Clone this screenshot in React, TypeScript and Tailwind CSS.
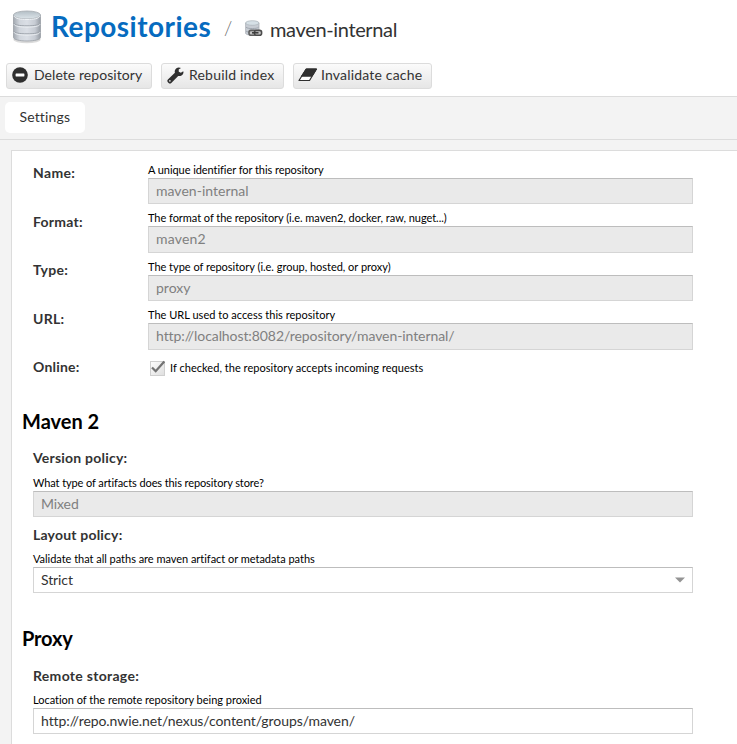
import React from "react";

const SANS = "font-['Lato','Open_Sans',sans-serif]";

function DatabaseIcon() {
  return (
    <svg width="30" height="34" viewBox="0 0 30 34" className="shrink-0">
      <defs>
        <linearGradient id="dbBody" x1="0" x2="1">
          <stop offset="0" stopColor="#a3a9b1" />
          <stop offset="0.22" stopColor="#d0d5dc" />
          <stop offset="0.5" stopColor="#dadee5" />
          <stop offset="0.8" stopColor="#c6cbd3" />
          <stop offset="1" stopColor="#969ca4" />
        </linearGradient>
        <linearGradient id="dbTop" x1="0" x2="0" y1="0" y2="1">
          <stop offset="0" stopColor="#b3bec5" />
          <stop offset="1" stopColor="#dde5ea" />
        </linearGradient>
      </defs>
      <ellipse cx="15" cy="29.6" rx="13.6" ry="3.6" fill="#000" opacity="0.14" />
      <path d="M1.5 5v22.500c0 2 6 3.500 13.500 3.500s13.500-1.500 13.500-3.500V5z" fill="url(#dbBody)" stroke="#9a9fa6" strokeWidth="0.8" />
      <path d="M1.500 13c1 2 6 2.800 13.500 2.800S27.500 15 28.500 13M1.500 21c1 2 6 2.800 13.500 2.800S27.500 23 28.500 21" fill="none" stroke="#a0a6ae" strokeWidth="1" />
      <path d="M2 14.300c1 2 6 2.800 13 2.800s12-.8 13-2.800M2 22.300c1 2 6 2.800 13 2.800s12-.8 13-2.800" fill="none" stroke="#eceff3" strokeWidth="0.900" />
      <ellipse cx="15" cy="5" rx="13.500" ry="4" fill="url(#dbTop)" stroke="#aab0b6" strokeWidth="0.900" />
      <path d="M2 6.200c1.500 2.300 6 3.300 13 3.300s11.500-1 13-3.300" fill="none" stroke="#eef2f5" strokeWidth="1" />
    </svg>
  );
}

function ProxyIcon() {
  return (
    <svg width="18" height="17" viewBox="0 0 18 17" className="shrink-0">
      <path d="M.6 3v10.200c0 1.200 3 2 6.700 2s6.700-.8 6.700-2V3z" fill="#c8cdd4" stroke="#a3a9b0" strokeWidth="0.700" />
      <path d="M1 7.200c1 1 3 1.300 6.300 1.300S12.500 8.200 13.600 7.200M1 11c1 1 3 1.300 6.300 1.300" fill="none" stroke="#9ba2aa" strokeWidth="0.900" />
      <ellipse cx="7.300" cy="3" rx="6.700" ry="2.300" fill="#d6e0e6" stroke="#a9b1b8" strokeWidth="0.700" />
      <rect x="4" y="10.400" width="7.200" height="4.800" rx="2" fill="#c4c4c4" stroke="#5e5e5e" strokeWidth="1.600" />
      <rect x="9.400" y="10.400" width="7.200" height="4.800" rx="2" fill="#c4c4c4" stroke="#4c4c4c" strokeWidth="1.600" />
      <path d="M7 12.800h6.500" stroke="#3a3a3a" strokeWidth="1.500" />
    </svg>
  );
}

function MinusIcon() {
  return (
    <svg width="16" height="16" viewBox="0 0 16 16" className="-mt-[2px] shrink-0">
      <circle cx="8" cy="8" r="7.800" fill="#2f2f2f" />
      <rect x="3.600" y="6.500" width="8.800" height="3" rx="0.400" fill="#fff" />
    </svg>
  );
}

function WrenchIcon() {
  return (
    <svg width="17" height="17" viewBox="0 0 17 17" className="-mt-[2px] shrink-0">
      <path
        fillRule="evenodd"
        d="M16.200 4.300 13.900 5.800 11.800 4.700 11.700 2.400 14 1C12.600.2 10.600.2 9.100 1.500 7.900 2.600 7.400 4.200 7.900 5.800L.9 12.500c-.8.800-.8 1.900 0 2.700l.7.700c.8.800 1.900.8 2.700 0l6.900-7c1.600.4 3.200 0 4.300-1.200 1-1 1.200-2.300.7-3.400zM2.900 14.700a.8.8 0 1 1 0-1.600.8.8 0 0 1 0 1.600z"
        fill="#2f2f2f"
      />
    </svg>
  );
}

function EraserIcon() {
  return (
    <svg width="20" height="14" viewBox="0 0 20 14" className="-mt-[2px] shrink-0">
      <path d="M8.200 1h10.300L11.500 12.500H1z" fill="#fff" stroke="#2f2f2f" strokeWidth="1.200" strokeLinejoin="round" />
      <path d="M8.200 1h10.300l-4.400 7.200H3.500z" fill="#2f2f2f" stroke="#2f2f2f" strokeWidth="1" strokeLinejoin="round" />
    </svg>
  );
}

function CheckedBox() {
  return (
    <svg width="16" height="16" viewBox="0 0 16 16" className="shrink-0">
      <defs>
        <linearGradient id="boxFill" x1="0" x2="1" y1="0" y2="1">
          <stop offset="0" stopColor="#fdfdfd" />
          <stop offset="1" stopColor="#dedede" />
        </linearGradient>
      </defs>
      <rect x="0.500" y="1.500" width="14" height="14" fill="url(#boxFill)" stroke="#cfcfcf" />
      <path d="M2 7.500 5.700 11.200 14.300 1.600" fill="none" stroke="#737373" strokeWidth="2.300" />
    </svg>
  );
}

function ToolButton({ icon, label, className }: { icon: React.ReactNode; label: string; className: string }) {
  return (
    <button
      className={`flex h-[26px] items-center rounded-[3px] border border-[#dcdcdc] bg-linear-to-b from-[#fbfbfb] to-[#e6e6e6] text-[14px] leading-[22px] whitespace-nowrap text-[#333] ${className}`}
    >
      {icon}
      <span className="-mt-0.5">{label}</span>
    </button>
  );
}

function Help({ children, className }: { children: string; className: string }) {
  return <div className={`h-4 text-[11px] leading-[15px] whitespace-nowrap text-black ${className}`}>{children}</div>;
}

function Box({ children, className }: { children: React.ReactNode; className: string }) {
  return (
    <div
      className={`flex items-center border border-[#d5d5d5] border-t-[#bdbdbd] px-[7px] text-[14px] leading-[20px] whitespace-nowrap ${className}`}
    >
      {children}
    </div>
  );
}

const rows = [
  { label: "Name:", labelCls: "pt-px tracking-[0.35px]", help: "A unique identifier for this repository", helpCls: "tracking-[-0.06px]", value: "maven-internal", valueCls: "h-[26px] tracking-[0.02px]" },
  { label: "Format:", labelCls: "pt-[2px] tracking-[0.25px]", help: "The format of the repository (i.e. maven2, docker, raw, nuget...)", helpCls: "tracking-[-0.04px]", value: "maven2", valueCls: "h-[27px] pb-[2px] tracking-[0.2px]" },
  { label: "Type:", labelCls: "pt-px tracking-[0.3px]", help: "The type of repository (i.e. group, hosted, or proxy)", helpCls: "tracking-[-0.02px]", value: "proxy", valueCls: "h-[26px] tracking-[0.02px]" },
  { label: "URL:", labelCls: "pt-[2px] tracking-[0.25px]", help: "The URL used to access this repository", helpCls: "tracking-[0.02px]", value: "http://localhost:8082/repository/maven-internal/", valueCls: "h-[27px] pb-[2px] tracking-[-0.08px]" },
];

const LABEL = "text-[14px] leading-[20px] font-bold whitespace-nowrap text-[#333]";

export default function App() {
  return (
    <div className={`h-[744px] w-[737px] overflow-hidden bg-[#f3f3f3] ${SANS}`}>
      <header className="h-[97px] border-b border-[#dcdcdc] bg-white">
        <div className="flex h-[63px] items-start pl-[12px]">
          <div className="mt-[10px]"><DatabaseIcon /></div>
          <h1 className="mt-[8px] ml-[9px] w-[173px] text-[28px] leading-[36px] font-bold tracking-[0.46px] whitespace-nowrap text-[#066bbf]">Repositories</h1>
          <span className="mt-[16px] w-[21px] text-[19px] leading-[24px] font-light text-[#666]">/</span>
          <div className="mt-[20px]"><ProxyIcon /></div>
          <span className="mt-[17px] ml-[7px] text-[20px] leading-[24px] tracking-[-0.35px] whitespace-nowrap text-[#333]">maven-internal</span>
        </div>
        <div className="flex gap-[9px] pl-[6px]">
          <ToolButton icon={<MinusIcon />} label="Delete repository" className="w-[146px] gap-[6px] pl-[5px] tracking-[0.06px]" />
          <ToolButton icon={<WrenchIcon />} label="Rebuild index" className="w-[123px] gap-[5px] pl-[5px] tracking-[0.2px]" />
          <ToolButton icon={<EraserIcon />} label="Invalidate cache" className="w-[139px] gap-[3px] pl-[4px] tracking-[0.18px]" />
        </div>
      </header>
      <nav className="h-[43px] border-b border-[#dcdcdc] pt-[5px] pl-[5px]">
        <div className="h-[31px] w-[80px] rounded-[5px] bg-white pl-[14.5px] text-[14px] leading-[30px] tracking-[0.15px] text-[#333]">Settings</div>
      </nav>
      <main className="mt-[10px] ml-[11px] h-[600px] border-t border-l border-[#dcdcdc] bg-white pt-[11px]">
        <div className="flex flex-col gap-[6px] pl-[21px]">
          {rows.map((r) => (
            <div key={r.label} className="flex">
              <div className={`w-[115px] ${LABEL} ${r.labelCls}`}>{r.label}</div>
              <div className="w-[545px]">
                <Help className={r.helpCls}>{r.help}</Help>
                <Box className={`bg-[#eaeaea] text-[#808080] ${r.valueCls}`}>{r.value}</Box>
              </div>
            </div>
          ))}
          <div className="flex h-[30px]">
            <div className={`w-[117px] pt-px tracking-[0.2px] ${LABEL}`}>Online:</div>
            <div className="flex pt-1">
              <CheckedBox />
              <Help className="ml-1 tracking-[0.03px]">If checked, the repository accepts incoming requests</Help>
            </div>
          </div>
        </div>

        <h2 className="mt-[23px] pl-[10px] text-[20px] leading-[24px] font-bold text-black">Maven 2</h2>
        <section className="w-[681px] pl-[21px]">
          <div className={`mt-[15px] tracking-[0.22px] ${LABEL}`}>Version policy:</div>
          <Help className="mt-[7px] tracking-[-0.1px]">What type of artifacts does this repository store?</Help>
          <Box className="h-[26px] bg-[#eaeaea] tracking-[-0.1px] text-[#808080]">Mixed</Box>
          <div className={`mt-[8px] tracking-[0.2px] ${LABEL}`}>Layout policy:</div>
          <Help className="mt-[6px] tracking-[-0.03px]">Validate that all paths are maven artifact or metadata paths</Help>
          <Box className="h-[26px] justify-between bg-white tracking-[-0.1px] text-[#333]">
            <span>Strict</span>
            <svg width="10" height="6" viewBox="0 0 10 6"><path d="M0 .5h10L5 5.500z" fill="#949494" /></svg>
          </Box>
        </section>

        <h2 className="mt-[33px] pl-[10px] text-[20px] leading-[24px] font-bold tracking-[-0.15px] text-black">Proxy</h2>
        <section className="w-[681px] pl-[21px]">
          <div className={`mt-[16px] tracking-[0.3px] ${LABEL}`}>Remote storage:</div>
          <Help className="mt-[6px] tracking-[-0.02px]">Location of the remote repository being proxied</Help>
          <Box className="h-[26px] bg-white tracking-[-0.08px] text-[#333]">http://repo.nwie.net/nexus/content/groups/maven/</Box>
        </section>
      </main>
    </div>
  );
}
